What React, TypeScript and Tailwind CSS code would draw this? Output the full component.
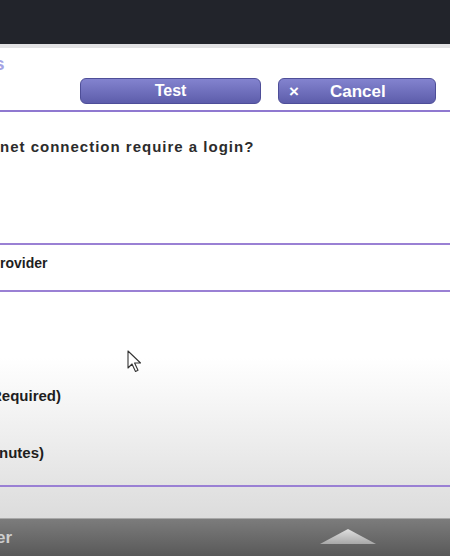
export default function App() {
    return (
        <div className="w-[450px] h-[556px] overflow-hidden flex flex-col bg-white font-['Liberation_Sans',Arial,sans-serif]">
            {/* top bar */}
            <div className="h-[44px] bg-[#22242b] shrink-0" />
            <div className="h-[4px] bg-[#e2e2e4] shrink-0" />

            <div className="flex-1 flex flex-col bg-[linear-gradient(to_bottom,#ffffff_0px,#ffffff_310px,#dcdcdc_470px,#d6d6d6_100%)]">
                <div className="h-[62px] relative">
                    <span className="absolute left-[-6px] top-[2px] text-[19px] font-bold text-[#a4a4e4]">s</span>
                    <div className="absolute left-[80px] top-[30px] flex gap-[17px]">
                        <button className="w-[181px] h-[26px] rounded-[6px] border border-[#4e4e98] bg-[linear-gradient(to_bottom,#8383cf,#5d5dab)] text-white font-bold text-[16px] leading-none">
                            Test
                        </button>
                        <button className="w-[158px] h-[26px] rounded-[6px] border border-[#4e4e98] bg-[linear-gradient(to_bottom,#8383cf,#5d5dab)] text-white font-bold text-[17px] leading-none flex items-center pl-[10px]">
                            <span className="text-[17px]">×</span>
                            <span className="ml-[31px]">Cancel</span>
                        </button>
                    </div>
                </div>
                <div className="h-[2px] bg-[#8f78d0]" />

                <div className="h-[131px] pt-[24px]">
                    <p className="text-[15px] font-bold text-[#2c2c2c] tracking-[1px]">net connection require a login?</p>
                </div>
                <div className="h-[2px] bg-[#9a80d4]" />
                <div className="h-[45px] flex items-center pb-[8px]">
                    <p className="text-[14px] font-bold text-[#1e1e1e]">rovider</p>
                </div>
                <div className="h-[2px] bg-[#9a80d4]" />

                <div className="h-[193px] relative">
                    <svg className="absolute left-[127px] top-[58px]" width="16" height="24" viewBox="0 0 16 24">
                        <path d="M1 1 L1 18 L5 14 L8.5 21.5 L11 20.3 L7.6 13 L13.5 13 Z" fill="#fff" stroke="#333" strokeWidth="1.1" strokeLinejoin="round" />
                    </svg>
                    <p className="absolute left-[-9px] top-[93px] text-[15px] font-bold text-[#1e1e1e]">Required)</p>
                    <p className="absolute left-[-1px] top-[150px] text-[15px] font-bold text-[#1e1e1e]">nutes)</p>
                </div>
                <div className="h-[2px] bg-[#9a80d4]" />
                <div className="flex-1" />
            </div>

            {/* bottom bar */}
            <div className="h-[38px] shrink-0 border-t border-[#a8a8a8] bg-[linear-gradient(to_bottom,#7c7c7c,#595959)] relative">
                <span className="absolute left-[-4px] top-[6px] text-[17px] font-bold text-[#cecece]">er</span>
                <svg className="absolute left-[320px] top-[10px]" width="56" height="16" viewBox="0 0 56 16">
                    <defs>
                        <linearGradient id="tri" x1="0" y1="0" x2="0" y2="1">
                            <stop offset="0" stopColor="#e0e0e0" />
                            <stop offset="1" stopColor="#a8a8a8" />
                        </linearGradient>
                    </defs>
                    <path d="M28 0 L56 15 L0 15 Z" fill="url(#tri)" />
                </svg>
            </div>
        </div>
    );
}
